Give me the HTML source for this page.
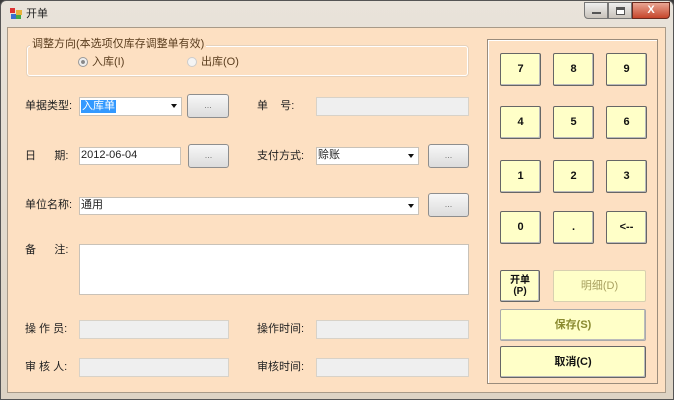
<!DOCTYPE html>
<html><head><meta charset="utf-8"><style>
*{margin:0;padding:0;box-sizing:border-box}
body{width:674px;height:400px;overflow:hidden;background:#3a3a3a;font-family:"Liberation Sans","Noto Sans CJK SC","WenQuanYi Zen Hei",sans-serif;font-size:11px;color:#222;position:relative}
.win{position:absolute;left:0;top:0;width:674px;height:400px;background:linear-gradient(180deg,#e9e3da,#ddd3c4);border:1px solid #555;border-radius:6px 6px 0 0}
.client{position:absolute;left:7px;top:27px;width:659px;height:366px;background:#fde0c2;border:1px solid #a89a88}
.a{position:absolute}
.lbl{position:absolute;font-size:11px;color:#222;white-space:nowrap;line-height:12px}
.tb{position:absolute;background:#fff;border:1px solid #c9c2b8}
.tb span{line-height:13px}
.dis{background:#efefef;border:1px solid #d8d2c8}
.btn{position:absolute;background:linear-gradient(#f7f7f7,#dcdcdc);border:1px solid #8e8e8e;border-radius:3px;color:#777;font-size:9px;text-align:center;line-height:20px}
.key{position:absolute;width:41px;height:33px;background:#ffffc8;border:1px solid #666;border-radius:2px;box-shadow:inset -1px -1px 0 #bbb;font-weight:bold;font-size:11px;text-align:center;line-height:31px;color:#111}
.arr{position:absolute;right:4px;top:6px;border-left:3.5px solid transparent;border-right:3.5px solid transparent;border-top:4px solid #111}
</style></head><body>
<div class="win">
<div class="a" style="left:9px;top:7px;width:12px;height:11px">
<div class="a" style="left:0;top:0;width:5px;height:5px;background:#d33"></div>
<div class="a" style="left:6px;top:2px;width:6px;height:5px;background:#e9b23a"></div>
<div class="a" style="left:1px;top:6px;width:5px;height:5px;background:#3a6fd0"></div>
<div class="a" style="left:6px;top:7px;width:5px;height:4px;background:#4a4"></div></div>
<div class="lbl" style="left:25px;top:7px;font-size:11px">开单</div>
<div class="a" style="left:583px;top:1px;width:24px;height:17px;background:linear-gradient(#eee,#c9c3bb);border:1px solid #777;border-radius:0 0 0 4px"><div class="a" style="left:7px;top:9px;width:9px;height:2px;background:#fff;border:1px solid #555"></div></div>
<div class="a" style="left:607px;top:1px;width:24px;height:17px;background:linear-gradient(#eee,#c9c3bb);border:1px solid #777"><div class="a" style="left:7px;top:4px;width:9px;height:8px;border:1px solid #555;border-top:3px solid #555;background:#fff"></div></div>
<div class="a" style="left:631px;top:1px;width:38px;height:17px;background:linear-gradient(#e9a592,#c6452b);border:1px solid #6b2a1e;border-radius:0 0 4px 0;color:#fff;font-weight:bold;text-align:center;line-height:15px;font-size:11px">X</div>
</div>
<div class="client"></div>
<div class="a" style="left:27px;top:46px;width:441px;height:30px;border:1px solid #fff;border-radius:3px;box-shadow:0 0 0 1px #e6d2bc"></div>
<div class="lbl" style="left:30px;top:38px;background:#fde0c2;padding:0 2px;color:#5a3d1e">调整方向(本选项仅库存调整单有效)</div>
<div class="a" style="left:78px;top:57px;width:10px;height:10px;border-radius:50%;border:1px solid #999;background:radial-gradient(#888 30%,#eee 40%)"></div>
<div class="lbl" style="left:92px;top:56px;color:#5a3d1e">入库(I)</div>
<div class="a" style="left:187px;top:57px;width:10px;height:10px;border-radius:50%;border:1px solid #ccc;background:#f4f4f4"></div>
<div class="lbl" style="left:201px;top:56px;color:#5a3d1e">出库(O)</div>
<div class="lbl" style="left:25px;top:100px">单据类型:</div>
<div class="tb" style="left:79px;top:97px;width:103px;height:19px"><span class="a" style="left:1px;top:2px;background:#3399ff;color:#fff;padding:0 1px">入库单</span><div class="arr"></div></div>
<div class="btn" style="left:187px;top:94px;width:42px;height:24px">...</div>
<div class="lbl" style="left:257px;top:100px">单&nbsp;&nbsp;&nbsp;&nbsp;号:</div>
<div class="tb dis" style="left:316px;top:97px;width:153px;height:19px"></div>
<div class="lbl" style="left:25px;top:150px">日&nbsp;&nbsp;&nbsp;&nbsp;&nbsp;&nbsp;期:</div>
<div class="tb" style="left:79px;top:147px;width:102px;height:18px"><span class="a" style="left:1px;top:1px">2012-06-04</span></div>
<div class="btn" style="left:188px;top:144px;width:41px;height:24px">...</div>
<div class="lbl" style="left:257px;top:150px">支付方式:</div>
<div class="tb" style="left:316px;top:147px;width:103px;height:18px"><span class="a" style="left:1px;top:1px">赊账</span><div class="arr"></div></div>
<div class="btn" style="left:428px;top:144px;width:41px;height:24px">...</div>
<div class="lbl" style="left:25px;top:199px">单位名称:</div>
<div class="tb" style="left:79px;top:197px;width:340px;height:18px"><span class="a" style="left:1px;top:1px">通用</span><div class="arr"></div></div>
<div class="btn" style="left:428px;top:193px;width:41px;height:24px">...</div>
<div class="lbl" style="left:25px;top:244px">备&nbsp;&nbsp;&nbsp;&nbsp;&nbsp;&nbsp;注:</div>
<div class="tb" style="left:79px;top:244px;width:390px;height:51px"></div>
<div class="lbl" style="left:25px;top:323px">操&nbsp;作&nbsp;员:</div>
<div class="tb dis" style="left:79px;top:320px;width:150px;height:19px"></div>
<div class="lbl" style="left:257px;top:323px">操作时间:</div>
<div class="tb dis" style="left:316px;top:320px;width:153px;height:19px"></div>
<div class="lbl" style="left:25px;top:361px">审&nbsp;核&nbsp;人:</div>
<div class="tb dis" style="left:79px;top:358px;width:150px;height:19px"></div>
<div class="lbl" style="left:257px;top:361px">审核时间:</div>
<div class="tb dis" style="left:316px;top:358px;width:153px;height:19px"></div>
<div class="a" style="left:487px;top:39px;width:171px;height:345px;border:1px solid #9a8c7c;box-shadow:inset 1px 1px 0 #fff"></div>
<div class="key" style="left:500px;top:53px">7</div><div class="key" style="left:553px;top:53px">8</div><div class="key" style="left:606px;top:53px">9</div>
<div class="key" style="left:500px;top:106px">4</div><div class="key" style="left:553px;top:106px">5</div><div class="key" style="left:606px;top:106px">6</div>
<div class="key" style="left:500px;top:160px">1</div><div class="key" style="left:553px;top:160px">2</div><div class="key" style="left:606px;top:160px">3</div>
<div class="key" style="left:500px;top:211px">0</div><div class="key" style="left:553px;top:211px">.</div><div class="key" style="left:606px;top:211px">&lt;--</div>
<div class="key" style="left:500px;top:270px;width:40px;height:32px;line-height:11px;padding-top:4px;font-size:10px">开单<br>(P)</div>
<div class="key" style="left:553px;top:270px;width:93px;height:32px;border-color:#d8d0b0;box-shadow:none;font-weight:normal;color:#a8a060">明细(D)</div>
<div class="key" style="left:500px;top:309px;width:146px;height:32px;border-color:#aaa;color:#8a8a30">保存(S)</div>
<div class="key" style="left:500px;top:346px;width:146px;height:32px">取消(C)</div>
</body></html>
